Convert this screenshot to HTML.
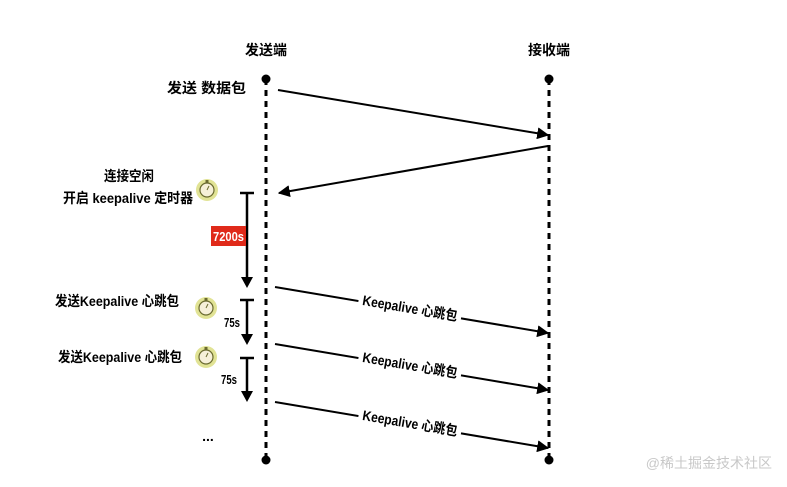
<!DOCTYPE html>
<html><head><meta charset="utf-8"><style>
html,body{margin:0;padding:0;background:#fff;}
svg{display:block;font-family:"Liberation Sans","Noto Sans CJK SC",sans-serif;}
</style></head><body>
<svg width="787" height="487" viewBox="0 0 787 487" xmlns="http://www.w3.org/2000/svg">
<defs>
<marker id="ah" viewBox="0 0 10 10" refX="9" refY="5" markerWidth="6" markerHeight="6" orient="auto"><path d="M0,0 L10,5 L0,10 z" fill="#000"/></marker>
<g id="timer"><circle r="11" fill="#d9dc7a" opacity="0.8"/><circle r="7" fill="#f6f0d8" stroke="#6a6a30" stroke-width="1.2"/><rect x="-1.5" y="-10" width="3" height="3" fill="#6a6a30"/><line x1="0" y1="0" x2="2" y2="-4" stroke="#6a6a30" stroke-width="1"/></g>
<g id="lbl"><rect x="-52" y="-10" width="104" height="20" fill="#fff"/><text x="-48" y="5" font-size="14" font-weight="bold" textLength="96" lengthAdjust="spacingAndGlyphs">Keepalive 心跳包</text></g>
</defs>
<text x="266" y="55" font-size="14" font-weight="bold" text-anchor="middle">发送端</text>
<text x="549" y="55" font-size="14" font-weight="bold" text-anchor="middle">接收端</text>
<line x1="266" y1="79" x2="266" y2="460" stroke="#000" stroke-width="3" stroke-dasharray="6,5"/>
<line x1="549" y1="79" x2="549" y2="460" stroke="#000" stroke-width="3" stroke-dasharray="6,5"/>
<circle cx="266" cy="79" r="4.5"/><circle cx="266" cy="460" r="4.5"/>
<circle cx="549" cy="79" r="4.5"/><circle cx="549" cy="460" r="4.5"/>
<g stroke="#000" stroke-width="2" fill="none" marker-end="url(#ah)">
<line x1="278" y1="90" x2="548" y2="135"/>
<line x1="548" y1="146" x2="279" y2="193"/>
<line x1="275" y1="287" x2="548" y2="333"/>
<line x1="275" y1="344" x2="548" y2="390"/>
<line x1="275" y1="402" x2="548" y2="448"/>
</g>
<use href="#lbl" transform="translate(410,308) rotate(9.6)"/>
<use href="#lbl" transform="translate(410,365) rotate(9.6)"/>
<use href="#lbl" transform="translate(410,423) rotate(9.6)"/>
<g font-size="14" font-weight="bold" lengthAdjust="spacingAndGlyphs">
<text x="167" y="93" textLength="79" lengthAdjust="spacingAndGlyphs">发送 数据包</text>
<text x="104" y="181" textLength="50" lengthAdjust="spacingAndGlyphs">连接空闲</text>
<text x="63" y="203" textLength="130" lengthAdjust="spacingAndGlyphs">开启 keepalive 定时器</text>
<text x="55" y="306" textLength="124" lengthAdjust="spacingAndGlyphs">发送Keepalive 心跳包</text>
<text x="58" y="362" textLength="124" lengthAdjust="spacingAndGlyphs">发送Keepalive 心跳包</text>
</g>
<use href="#timer" x="207" y="190"/>
<use href="#timer" x="206" y="308"/>
<use href="#timer" x="206" y="357"/>
<g stroke="#000" stroke-width="2.5">
<line x1="240" y1="193" x2="254" y2="193"/><line x1="247" y1="193" x2="247" y2="278"/>
<line x1="240" y1="300" x2="254" y2="300"/><line x1="247" y1="300" x2="247" y2="335"/>
<line x1="240" y1="358" x2="254" y2="358"/><line x1="247" y1="358" x2="247" y2="392"/>
</g>
<path d="M241,277 L253,277 L247,288 z M241,334 L253,334 L247,345 z M241,391 L253,391 L247,402 z"/>
<rect x="211" y="226" width="35" height="20" fill="#e02a1a"/>
<text x="213" y="241" font-size="13" font-weight="bold" fill="#fff" textLength="31" lengthAdjust="spacingAndGlyphs">7200s</text>
<text x="224" y="327" font-size="13" font-weight="bold" textLength="16" lengthAdjust="spacingAndGlyphs">75s</text>
<text x="221" y="384" font-size="13" font-weight="bold" textLength="16" lengthAdjust="spacingAndGlyphs">75s</text>
<text x="208" y="441" font-size="14" font-weight="bold" text-anchor="middle">...</text>
<text x="772" y="468" font-size="14" fill="#c8c8c8" text-anchor="end">@稀土掘金技术社区</text>
</svg>
</body></html>
